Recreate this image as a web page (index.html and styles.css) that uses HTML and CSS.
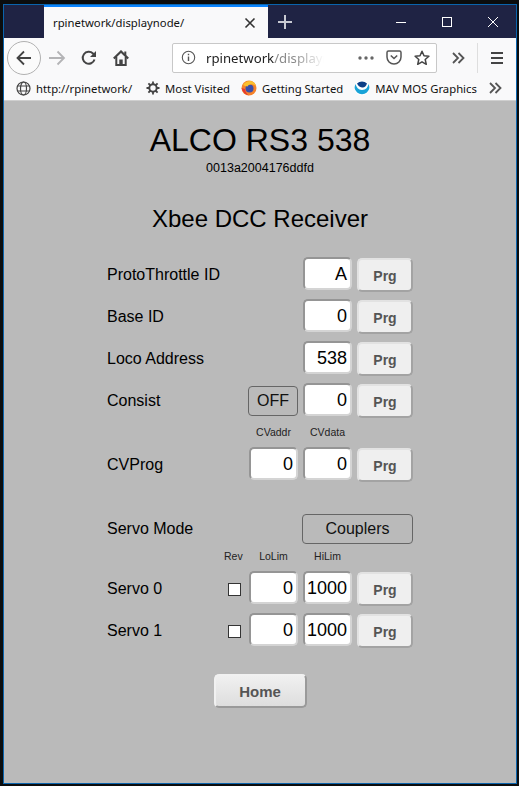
FILE: index.html
```html
<!DOCTYPE html>
<html lang="en">
<head>
  <meta charset="UTF-8">
  <title>rpinetwork/displaynode/</title>
  <link rel="stylesheet" href="styles.css">
</head>
<body>
  <div class="window">
    <div class="tab-bar">
      <div class="tab">
        <span class="tab-title">rpinetwork/displaynode/</span>
        <svg class="tab-close" width="12" height="12" viewBox="0 0 12 12"><path d="M1.500 1.500l9 9M10.500 1.500l-9 9" stroke="#333" stroke-width="1.600" fill="none"/></svg>
      </div>
      <svg class="new-tab" width="16" height="16" viewBox="0 0 16 16"><path d="M8 1v14M1 8h14" stroke="#c8c9d2" stroke-width="2" fill="none"/></svg>
      <div class="win-controls">
        <svg width="12" height="12" viewBox="0 0 12 12"><path d="M1 6.500h10" stroke="#fff" fill="none"/></svg>
        <svg width="12" height="12" viewBox="0 0 12 12"><rect x="1.500" y="1.500" width="9" height="9" stroke="#fff" fill="none"/></svg>
        <svg width="12" height="12" viewBox="0 0 12 12"><path d="M1 1l10 10M11 1L1 11" stroke="#fff" fill="none"/></svg>
      </div>
    </div>

    <div class="nav-bar">
      <div class="back-btn">
        <svg width="18" height="18" viewBox="0 0 18 18"><path d="M2 9h14M9 2.500L2.500 9 9 15.500" stroke="#444" stroke-width="1.800" fill="none"/></svg>
      </div>
      <svg class="nav-icon forward" width="18" height="18" viewBox="0 0 18 18"><path d="M1 9h15M9.500 2.500L16 9l-6.500 6.500" stroke="#b4b4b6" stroke-width="1.800" fill="none"/></svg>
      <svg class="nav-icon reload" width="16" height="16" viewBox="0 0 16 16"><path d="M13.500 9.500A6 6 0 1 1 12 3.500L14 5.500" stroke="#444" stroke-width="2" fill="none"/><path d="M15 1v6H9z" fill="#444"/></svg>
      <svg class="nav-icon home" width="16" height="16" viewBox="0 0 16 16"><path d="M.8 8.500L8 1.500l7.200 7" stroke="#444" stroke-width="2.200" fill="none"/><path d="M3.300 7v8h9.400V7" stroke="#444" stroke-width="2" fill="none"/><rect x="6.300" y="9.500" width="3.400" height="5.500" fill="#444"/><rect x="11.300" y="1.500" width="2" height="4" fill="#444"/></svg>
      <div class="url-box">
        <svg width="15" height="15" viewBox="0 0 15 15"><circle cx="7.500" cy="7.500" r="6.200" stroke="#555" stroke-width="1.100" fill="none"/><path d="M7.500 6.500v4.500M7.500 3.800v1.500" stroke="#555" stroke-width="1.400"/></svg>
        <span class="url-text">rpinetwork<span class="url-path">/displayn</span></span>
        <svg class="url-dots" width="16" height="4" viewBox="0 0 16 4"><circle cx="2" cy="2" r="1.700" fill="#666"/><circle cx="8" cy="2" r="1.700" fill="#666"/><circle cx="14" cy="2" r="1.700" fill="#666"/></svg>
        <svg width="16" height="15" viewBox="0 0 16 15"><path d="M1 2.500Q1 1 2.500 1h11Q15 1 15 2.500V7A7 7 0 0 1 1 7z" stroke="#555" stroke-width="1.500" fill="none"/><path d="M4.800 5.500L8 8.500l3.200-3" stroke="#555" stroke-width="1.600" fill="none"/></svg>
        <svg width="16" height="16" viewBox="0 0 16 16"><path d="M8 1.300l2 4.500 4.900.5-3.700 3.200 1.100 4.800L8 11.800l-4.300 2.500 1.100-4.800L1.100 6.300 6 5.800z" stroke="#444" stroke-width="1.500" fill="none" stroke-linejoin="round"/></svg>
      </div>
      <svg class="nav-icon overflow" width="13" height="12" viewBox="0 0 13 12"><path d="M1 1l5 5-5 5M6.500 1l5 5-5 5" stroke="#555" stroke-width="1.800" fill="none"/></svg>
      <span class="nav-sep"></span>
      <svg class="nav-icon menu" width="14" height="12" viewBox="0 0 14 12"><path d="M1 1h12M1 6h12M1 11h12" stroke="#444" stroke-width="1.800" fill="none"/></svg>
    </div>

    <div class="bookmarks">
      <span class="bookmark bookmark-first">
        <svg width="15" height="15" viewBox="0 0 15 15"><g stroke="#444" stroke-width="1.200" fill="none"><circle cx="7.500" cy="7.500" r="6.500"/><ellipse cx="7.500" cy="7.500" rx="3" ry="6.500"/><path d="M1.500 5h12M1.500 10h12"/></g></svg>
        http://rpinetwork/
      </span>
      <span class="bookmark">
        <svg width="14" height="14" viewBox="0 0 14 14"><circle cx="7" cy="7" r="3.700" stroke="#444" stroke-width="2" fill="none"/><path d="M7 .5v3M7 10.500v3M.5 7h3M10.500 7h3M2.400 2.400l2.100 2.100M9.500 9.500l2.100 2.100M11.600 2.400L9.500 4.500M4.500 9.500l-2.100 2.100" stroke="#444" stroke-width="1.800"/></svg>
        Most Visited
      </span>
      <span class="bookmark">
        <svg width="16" height="16" viewBox="0 0 16 16"><circle cx="8" cy="8" r="7.500" fill="#f5822a"/><circle cx="8.500" cy="8.500" r="4" fill="#3b4ea8"/><path d="M2 5Q5 .5 10 1 14 2 15 6 12 3.500 9 4.500 7 5 6.500 6.500 4 6 2 5z" fill="#fbc02d"/><path d="M.5 8Q2 14 8 15.500 4.500 13 4 9z" fill="#e6392f"/></svg>
        Getting Started
      </span>
      <span class="bookmark">
        <svg width="16" height="16" viewBox="0 0 16 16"><circle cx="8" cy="8" r="7.500" fill="#fff"/><path d="M3 3.500A7 7 0 0 1 13 3.500Q11.500 8 8 7.500 4.500 7 3 3.500z" fill="#0c3f87"/><path d="M1.700 4Q.5 6 .6 8A7.500 7.500 0 0 0 15.400 8Q15.500 6 14.300 4 14 9.500 8 10 2.500 9.500 1.700 4z" fill="#18a3d8"/></svg>
        MAV MOS Graphics
      </span>
      <svg class="bookmarks-more" width="13" height="12" viewBox="0 0 13 12"><path d="M1 1l5 5-5 5M6.500 1l5 5-5 5" stroke="#555" stroke-width="1.800" fill="none"/></svg>
    </div>

    <main class="page">
      <h1>ALCO RS3 538</h1>
      <div class="serial">0013a2004176ddfd</div>
      <h2>Xbee DCC Receiver</h2>

      <div class="settings">
        <div class="row">
          <span class="label">ProtoThrottle ID</span>
          <span class="value">A</span>
          <button class="btn-prg">Prg</button>
        </div>
        <div class="row">
          <span class="label">Base ID</span>
          <span class="value">0</span>
          <button class="btn-prg">Prg</button>
        </div>
        <div class="row">
          <span class="label">Loco Address</span>
          <span class="value">538</span>
          <button class="btn-prg">Prg</button>
        </div>
        <div class="row">
          <span class="label">Consist</span>
          <button class="btn-flat btn-off">OFF</button>
          <span class="value">0</span>
          <button class="btn-prg">Prg</button>
        </div>

        <div class="caption-row">
          <span class="label"></span>
          <span class="cap">CVaddr</span>
          <span class="cap">CVdata</span>
          <span class="cap-spacer"></span>
        </div>
        <div class="row">
          <span class="label">CVProg</span>
          <span class="value">0</span>
          <span class="value">0</span>
          <button class="btn-prg">Prg</button>
        </div>

        <div class="row servo-mode">
          <span class="label">Servo Mode</span>
          <button class="btn-flat btn-mode">Couplers</button>
        </div>

        <div class="caption-row servo-caps">
          <span class="label"></span>
          <span class="cap cap-rev">Rev</span>
          <span class="cap">LoLim</span>
          <span class="cap">HiLim</span>
          <span class="cap-spacer"></span>
        </div>
        <div class="row">
          <span class="label">Servo 0</span>
          <span class="check"></span>
          <span class="value">0</span>
          <span class="value">1000</span>
          <button class="btn-prg">Prg</button>
        </div>
        <div class="row">
          <span class="label">Servo 1</span>
          <span class="check"></span>
          <span class="value">0</span>
          <span class="value">1000</span>
          <button class="btn-prg">Prg</button>
        </div>
      </div>

      <button class="btn-home">Home</button>
    </main>
  </div>
</body>
</html>
```

FILE: styles.css
```css
html, body {
  height: 100%;
}
body {
  margin: 0;
  padding: 4px 2px 2px 3px;
  box-sizing: border-box;
  background: #0b0d0e;
  overflow: hidden;
  font-family: "Liberation Sans", Arial, sans-serif;
}
.window {
  height: 100%;
  box-sizing: border-box;
  border: 1px solid #0a64ad;
  display: flex;
  flex-direction: column;
  background: #bababa;
}

/* browser chrome */
.tab-bar {
  height: 33px;
  background: #1f2344;
  display: flex;
  align-items: center;
  flex-shrink: 0;
}
.tab {
  margin-left: 40px;
  width: 224px;
  height: 100%;
  box-sizing: border-box;
  border-top: 2px solid #0a84ff;
  background: #f9f9fa;
  display: flex;
  align-items: center;
  padding: 0 12px 0 9px;
}
.tab-title {
  flex: 1;
  font-family: "Noto Sans", sans-serif;
  font-size: 11.300px;
  color: #111;
}
.new-tab {
  margin-left: 9px;
}
.win-controls {
  margin-left: auto;
  display: flex;
  gap: 34px;
  padding-right: 17px;
}
.nav-bar {
  height: 38px;
  box-sizing: border-box;
  background: #f9f9fa;
  display: flex;
  align-items: center;
  flex-shrink: 0;
  padding: 1px 0 0 3px;
}
.back-btn {
  width: 34px;
  height: 34px;
  box-sizing: border-box;
  border: 1px solid #b1b1b1;
  border-radius: 50%;
  background: #fbfbfb;
  display: flex;
  align-items: center;
  justify-content: center;
}
.nav-icon {
  flex-shrink: 0;
}
.forward {
  margin-left: 7px;
}
.reload {
  margin-left: 15px;
}
.home {
  margin-left: 16px;
}
.url-box {
  margin-left: 43px;
  width: 265px;
  height: 30px;
  box-sizing: border-box;
  border: 1px solid #c8c8c8;
  border-radius: 2px;
  background: #fff;
  display: flex;
  align-items: center;
  gap: 12px;
  padding: 0 6px 0 8px;
  flex-shrink: 0;
}
.url-text {
  flex: 1;
  margin-left: -2px;
  font-family: "Noto Sans", sans-serif;
  font-size: 13.200px;
  color: #222;
  white-space: nowrap;
  mask-image: linear-gradient(to right, #000 88px, transparent 118px);
}
.url-path {
  color: #8a8a8a;
}
.overflow {
  margin-left: 15px;
}
.nav-sep {
  width: 1px;
  height: 30px;
  background: #dedede;
  margin-left: 12px;
}
.menu {
  margin-left: 12px;
}
.bookmarks {
  height: 25px;
  box-sizing: border-box;
  background: #f9f9fa;
  border-bottom: 1px solid #cfcfcf;
  display: flex;
  align-items: center;
  flex-shrink: 0;
  padding: 0 0 0 12px;
  font-family: "Noto Sans", sans-serif;
  font-size: 11.300px;
  color: #111;
  gap: 11px;
}
.bookmark {
  display: flex;
  align-items: center;
  gap: 5px;
  white-space: nowrap;
}
.bookmark-first {
  margin-right: 3px;
}
.bookmarks-more {
  margin-left: auto;
  margin-right: 14px;
  flex-shrink: 0;
}

/* page */
.page {
  flex: 1;
  display: flex;
  flex-direction: column;
  align-items: center;
  color: #000;
}
h1 {
  margin: 21px 0 0;
  font-size: 32px;
  font-weight: normal;
  line-height: 37px;
}
.serial {
  font-size: 12.500px;
  line-height: 14px;
  margin-top: 2px;
}
h2 {
  margin: 30px 0 0;
  font-size: 24px;
  font-weight: normal;
  line-height: 28px;
}
.settings {
  width: 306px;
  margin-top: 21px;
  display: flex;
  flex-direction: column;
}
.row {
  height: 42px;
  display: flex;
  align-items: center;
  gap: 5px;
}
.label {
  flex: 1;
  font-size: 16px;
}
.value {
  width: 49px;
  height: 33px;
  margin-bottom: 4px;
  box-sizing: border-box;
  border: 2px solid;
  border-color: #959595 #d4d4d4 #d4d4d4 #959595;
  border-radius: 5px;
  background: #fff;
  font-size: 18px;
  line-height: 30px;
  text-align: right;
  padding-right: 3px;
}
.btn-prg {
  width: 56px;
  height: 34px;
  box-sizing: border-box;
  border: 2px solid;
  border-color: #e2e2e2 #a3a3a3 #a3a3a3 #e2e2e2;
  border-radius: 5px;
  background: #efefef;
  font: bold 14px "Liberation Sans", Arial, sans-serif;
  color: #555;
  padding: 2px 0 0;
}
.btn-flat {
  box-sizing: border-box;
  height: 30px;
  border: 1px solid #666;
  border-radius: 4px;
  background: #bababa;
  font: 16px "Liberation Sans", Arial, sans-serif;
  color: #111;
  padding: 0;
}
.btn-off {
  width: 50px;
}
.btn-mode {
  width: 111px;
}
.caption-row {
  height: 22px;
  display: flex;
  align-items: flex-start;
  gap: 5px;
}
.cap {
  width: 49px;
  font-size: 10.500px;
  line-height: 20px;
  text-align: center;
  color: #222;
}
.cap-rev {
  width: 18px;
  margin-right: 2px;
}
.cap-spacer {
  width: 56px;
}
.servo-mode {
  margin-top: 22px;
}
.servo-caps {
  height: 18px;
}
.servo-caps .cap {
  line-height: 10px;
  margin-top: 1px;
}
.check {
  width: 13px;
  height: 13px;
  box-sizing: border-box;
  border: 1px solid #333;
  background: #fff;
  margin-right: 3px;
  margin-top: 1px;
}
.btn-home {
  margin-top: 22px;
  width: 93px;
  height: 34px;
  box-sizing: border-box;
  border: 2px solid;
  border-color: #f1f1f1 #9a9a9a #9a9a9a #f1f1f1;
  border-radius: 5px;
  background: linear-gradient(#f0f0f0, #dedede);
  font: bold 15px "Liberation Sans", Arial, sans-serif;
  color: #555;
}
```
